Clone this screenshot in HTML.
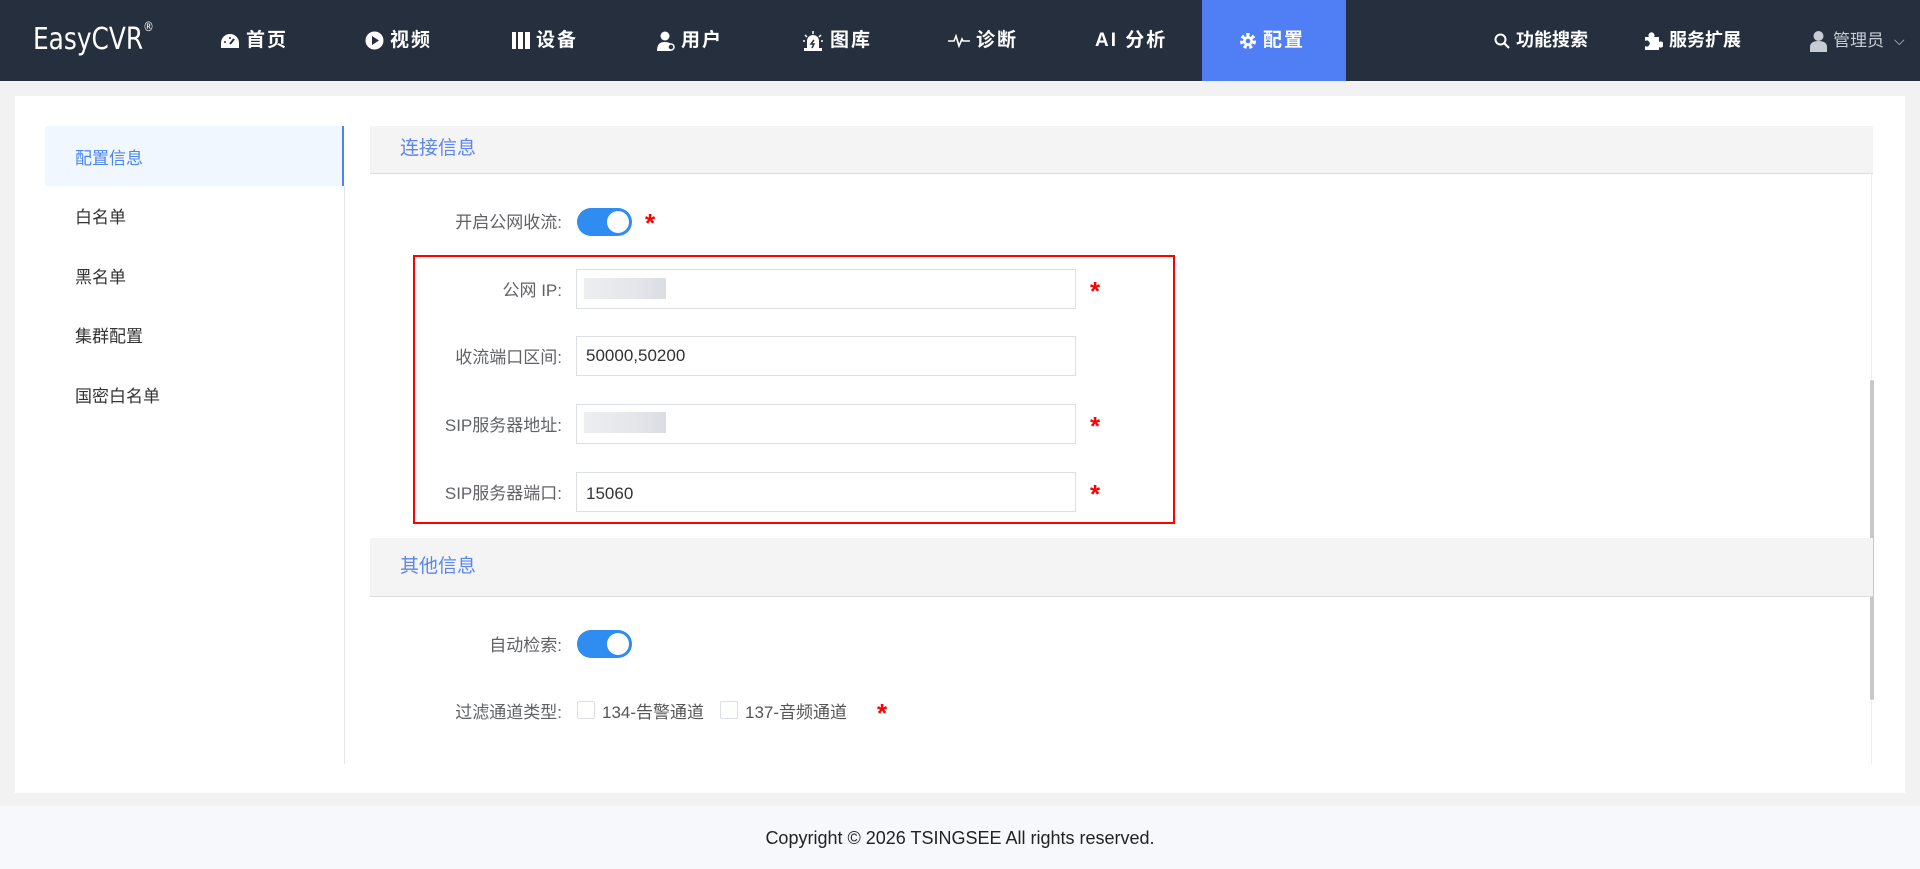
<!DOCTYPE html>
<html><head><meta charset="utf-8"><style>
*{margin:0;padding:0;box-sizing:border-box}
body{width:1920px;height:869px;overflow:hidden;background:#f2f2f2;font-family:"Liberation Sans","Noto Sans CJK SC",sans-serif;position:relative}
.a{position:absolute}
.hd{left:0;top:0;width:1920px;height:81px;background:#262f3e}
.nav{top:0;height:81px;line-height:81px;color:#fff;font-weight:bold;font-size:19px;letter-spacing:2px;white-space:nowrap;display:flex;align-items:center;gap:6px}
.nav svg{display:block}
.lbl{font-size:17px;color:#606266;text-align:right;width:300px;white-space:nowrap}
.inp{left:576px;width:500px;height:40px;border:1px solid #dcdfe6;background:#fff;font-size:17px;color:#333;padding-left:9px;line-height:38px}
.star{color:#f00;font-size:26px;font-weight:bold;line-height:1}
.sw{width:55px;height:28px;border-radius:14px;background:#2f8cf0}
.sw:after{content:"";position:absolute;right:3px;top:3px;width:22px;height:22px;border-radius:50%;background:#fff}
.blur{left:584px;width:82px;height:21px;background:linear-gradient(90deg,#eceef1,#e4e6ea 60%,#dadde2)}
.sec{left:370px;width:1503px;background:#f4f4f4;border-bottom:1px solid #dcdcdc;color:#5b86f0;font-size:19px;padding-left:30px}
.side{left:75px;font-size:17px;color:#333}
.cb{width:18px;height:18px;border:1px solid #dcdfe6;background:#fff;border-radius:2px}
</style></head><body>
<div class="a hd"></div>
<div class="a" style="left:33px;top:22px;color:#fff;font-size:30px;font-family:'DejaVu Sans Condensed','Liberation Sans Narrow','Liberation Sans',sans-serif;transform:scaleX(0.92);transform-origin:left">EasyCVR<sup style="font-size:13px;vertical-align:top;position:relative;top:-2px">®</sup></div>

<div class="a nav" style="left:220px"><svg width="20" height="16" viewBox="0 0 20 16"><path d="M10 1A9 9 0 0 0 1 10v5h18v-5A9 9 0 0 0 10 1z" fill="#fff"/><path d="M10 11L14 6" stroke="#262f3e" stroke-width="2"/><circle cx="5" cy="9" r="1" fill="#262f3e"/><circle cx="10" cy="5" r="1" fill="#262f3e"/></svg>首页</div>
<div class="a nav" style="left:365px"><svg width="19" height="19"><circle cx="9.5" cy="9.5" r="9" fill="#fff"/><path d="M7 5l7 4.5-7 4.5z" fill="#262f3e"/></svg>视频</div>
<div class="a nav" style="left:512px"><svg width="18" height="17"><rect x="0" y="0" width="4" height="17" fill="#fff"/><rect x="6" y="0" width="5" height="17" fill="#fff"/><rect x="13" y="0" width="5" height="17" fill="#fff"/></svg>设备</div>
<div class="a nav" style="left:657px"><svg width="18" height="20"><circle cx="8" cy="5" r="4.5" fill="#fff"/><path d="M0 20c0-7 3-9 8-9s6 2 6 4v5z" fill="#fff"/><circle cx="14" cy="16" r="3" fill="#262f3e" stroke="#fff" stroke-width="1.5"/></svg>用户</div>
<div class="a nav" style="left:802px"><svg width="22" height="21"><path d="M5 20V11a6 6 0 0 1 12 0v9z" fill="#fff"/><rect x="2" y="18" width="18" height="3" fill="#fff"/><path d="M11 1v3M3 5l2 2M19 5l-2 2M1 11h2M19 11h2" stroke="#fff" stroke-width="1.5"/><path d="M12 10l-3 4h3l-2 4" stroke="#262f3e" stroke-width="1.5" fill="none"/></svg>图库</div>
<div class="a nav" style="left:948px"><svg width="22" height="14"><path d="M0 7h6l2-5 3 10 3-7 1 2h7" stroke="#fff" stroke-width="1.6" fill="none"/></svg>诊断</div>
<div class="a nav" style="left:1095px">AI 分析</div>
<div class="a" style="left:1202px;top:0;width:144px;height:81px;background:#507ef5"></div>
<div class="a nav" style="left:1239px"><svg width="18" height="18" viewBox="0 0 18 18"><circle cx="9" cy="9" r="6" fill="none" stroke="#fff" stroke-width="4" stroke-dasharray="3 2.3"/><circle cx="9" cy="9" r="5" fill="#fff"/><circle cx="9" cy="9" r="2.3" fill="#507ef5"/></svg>配置</div>
<div class="a nav" style="left:1494px;letter-spacing:0;font-size:18px"><svg width="16" height="16"><circle cx="6.5" cy="6.5" r="5" fill="none" stroke="#fff" stroke-width="2"/><path d="M10 10l5 5" stroke="#fff" stroke-width="2.2"/></svg>功能搜索</div>
<div class="a nav" style="left:1643px;letter-spacing:0;font-size:18px"><svg width="20" height="20"><path d="M2 6h4a3 3 0 1 1 5 0h5v5a3 3 0 1 1 0 5v3H2v-4a3 3 0 1 0 0-5z" fill="#fff"/></svg>服务扩展</div>
<div class="a nav" style="left:1810px;font-weight:normal;letter-spacing:0;font-size:17px;color:#c7ccd3"><svg width="17" height="22"><circle cx="8.5" cy="6" r="5" fill="#c7ccd3"/><path d="M0 22v-5c0-4 3-6 8.5-6s8.5 2 8.5 6v5z" fill="#c7ccd3"/></svg>管理员 <span style="font-size:14px;margin-left:4px">⌵</span></div>

<div class="a" style="left:15px;top:96px;width:1890px;height:697px;background:#fff"></div>
<div class="a" style="left:45px;top:126px;width:299px;height:60px;background:#f0f7ff;border-right:2px solid #4b86f0"></div>
<div class="a" style="left:344px;top:186px;width:1px;height:578px;background:#e4e4e4"></div>
<div class="a side" style="top:144px;color:#4b86f0">配置信息</div>
<div class="a side" style="top:203px">白名单</div>
<div class="a side" style="top:263px">黑名单</div>
<div class="a side" style="top:322px">集群配置</div>
<div class="a side" style="top:382px">国密白名单</div>

<div class="a sec" style="top:126px;height:48px;line-height:46px">连接信息</div>
<div class="a" style="left:1871px;top:174px;width:1px;height:590px;background:#eee"></div>
<div class="a" style="left:1870px;top:380px;width:4px;height:320px;background:#c8c8c8;border-radius:2px"></div>

<div class="a lbl" style="left:262px;top:208px">开启公网收流:</div>
<div class="a sw" style="left:577px;top:208px"></div>
<div class="a star" style="left:645px;top:210px">*</div>

<div class="a" style="left:413px;top:255px;width:762px;height:269px;border:2px solid #f00"></div>

<div class="a lbl" style="left:262px;top:276px">公网 IP:</div>
<div class="a inp" style="top:269px"></div><div class="a blur" style="top:278px"></div>
<div class="a star" style="left:1090px;top:278px">*</div>

<div class="a lbl" style="left:262px;top:343px">收流端口区间:</div>
<div class="a inp" style="top:336px">50000,50200</div>

<div class="a lbl" style="left:262px;top:411px">SIP服务器地址:</div>
<div class="a inp" style="top:404px"></div><div class="a blur" style="top:412px"></div>
<div class="a star" style="left:1090px;top:413px">*</div>

<div class="a lbl" style="left:262px;top:479px">SIP服务器端口:</div>
<div class="a inp" style="top:472px;line-height:42px">15060</div>
<div class="a star" style="left:1090px;top:481px">*</div>

<div class="a sec" style="top:538px;height:59px;line-height:57px">其他信息</div>

<div class="a lbl" style="left:262px;top:631px">自动检索:</div>
<div class="a sw" style="left:577px;top:630px"></div>

<div class="a lbl" style="left:262px;top:698px">过滤通道类型:</div>
<div class="a cb" style="left:577px;top:701px"></div>
<div class="a" style="left:602px;top:698px;font-size:17px;color:#555">134-告警通道</div>
<div class="a cb" style="left:720px;top:701px"></div>
<div class="a" style="left:745px;top:698px;font-size:17px;color:#555">137-音频通道</div>
<div class="a star" style="left:877px;top:700px">*</div>

<div class="a" style="left:0;top:806px;width:1920px;height:63px;background:#f6f8fc"></div>
<div class="a" style="left:0;top:828px;width:1920px;text-align:center;font-size:18px;color:#222">Copyright © 2026 TSINGSEE All rights reserved.</div>
</body></html>
